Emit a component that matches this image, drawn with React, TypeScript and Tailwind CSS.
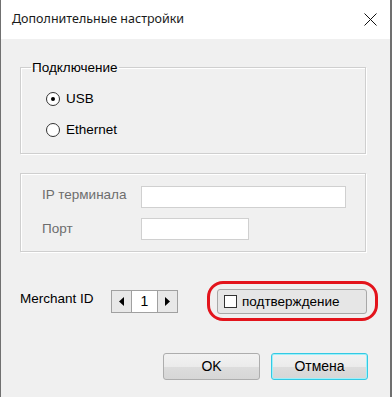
const btn =
  "h-[27px] w-[97px] rounded-[3px] border text-[14px] text-black bg-[linear-gradient(to_bottom,#f2f2f2_0%,#ebebeb_50%,#dddddd_51%,#d6d6d6_100%)]";

const Radio = ({ checked, label }: { checked?: boolean; label: string }) => (
  <div className="flex h-[20px] items-center gap-[6px]">
    <span className="flex h-[14px] w-[14px] items-center justify-center rounded-full border border-[#333] bg-white">
      {checked && <span className="h-[4px] w-[4px] rounded-full bg-black"></span>}
    </span>
    <span>{label}</span>
  </div>
);

const App = () => {
  return (
    <div
      className="flex h-[397px] w-[392px] flex-col border-l border-r-2 border-[#707070] bg-[#f0f0f0] text-[13.5px] text-black"
      style={{ fontFamily: '"Liberation Sans", Arial, sans-serif' }}
    >
      {/* title bar */}
      <div className="flex h-[39px] items-center justify-between bg-white pl-[11px] pr-[13px]">
        <span className="text-[12.5px] text-[#1a1a1a]" style={{ fontFamily: '"Noto Sans", sans-serif' }}>
          Дополнительные настройки
        </span>
        <svg width="13" height="13" viewBox="0 0 13 13">
          <path d="M0.5 0.5 L12.5 12.5 M12.5 0.5 L0.5 12.5" stroke="#111" strokeWidth="1" />
        </svg>
      </div>

      <div className="flex flex-1 flex-col pl-[19px]">
        <fieldset className="mt-[21px] w-[346px] border border-[#cfcfcf] pb-[13px] shadow-[inset_1px_1px_0_#fff,1px_1px_0_#fff]">
          <legend className="ml-[10px] px-[1px] leading-[15px]">Подключение</legend>
          <div className="flex flex-col gap-[11px] pl-[25px] pt-[14px]">
            <Radio checked label="USB" />
            <Radio label="Ethernet" />
          </div>
        </fieldset>

        <div className="mt-[19px] flex w-[346px] flex-col gap-[10px] border border-[#cfcfcf] pb-[11px] pl-[21px] pt-[11px] text-[#6d6d6d] shadow-[inset_1px_1px_0_#fff,1px_1px_0_#fff]">
          <div className="flex items-center">
            <span className="w-[99px] pb-[3px]">IP терминала</span>
            <div className="h-[22px] w-[205px] border border-[#d0d0d0] bg-white"></div>
          </div>
          <div className="flex items-center">
            <span className="w-[99px]">Порт</span>
            <div className="h-[22px] w-[108px] border border-[#d0d0d0] bg-white"></div>
          </div>
        </div>

        <div className="mt-[29px] flex items-center">
          <span className="w-[91px] pb-[4px]">Merchant ID</span>
          <div className="flex h-[23px] w-[67px] border border-[#a0a0a0] bg-white">
            <div className="flex w-[20px] items-center justify-center border-r border-[#a0a0a0] bg-[#e8e8e8]">
              <svg width="5" height="9" viewBox="0 0 5 9">
                <path d="M5 0 L0 4.5 L5 9 Z" fill="#000" />
              </svg>
            </div>
            <div className="flex flex-1 items-center justify-center text-[14px]">1</div>
            <div className="flex w-[20px] items-center justify-center border-l border-[#a0a0a0] bg-[#e8e8e8]">
              <svg width="5" height="9" viewBox="0 0 5 9">
                <path d="M0 0 L5 4.5 L0 9 Z" fill="#000" />
              </svg>
            </div>
          </div>
          <div className="ml-[29px] rounded-[16px] border-[3px] border-[#e3141c] pb-[4px] pl-[7px] pr-[8px] pt-[5px]">
            <div className="flex h-[25px] w-[150px] items-center gap-[5px] rounded-[3px] border border-[#a8a8a8] bg-[#e6e6e6] pl-[6px]">
              <span className="h-[13px] w-[13px] border border-[#333] bg-white"></span>
              <span>подтверждение</span>
            </div>
          </div>
        </div>

        <div className="mt-[32px] flex gap-[11px] pl-[143px]">
          <button className={btn + " border-[#adadad]"}>OK</button>
          <button className={btn + " border-[#33c9e3] shadow-[inset_0_0_0_1px_#9ef0fa]"}>Отмена</button>
        </div>
      </div>
    </div>
  );
};

export default App;
